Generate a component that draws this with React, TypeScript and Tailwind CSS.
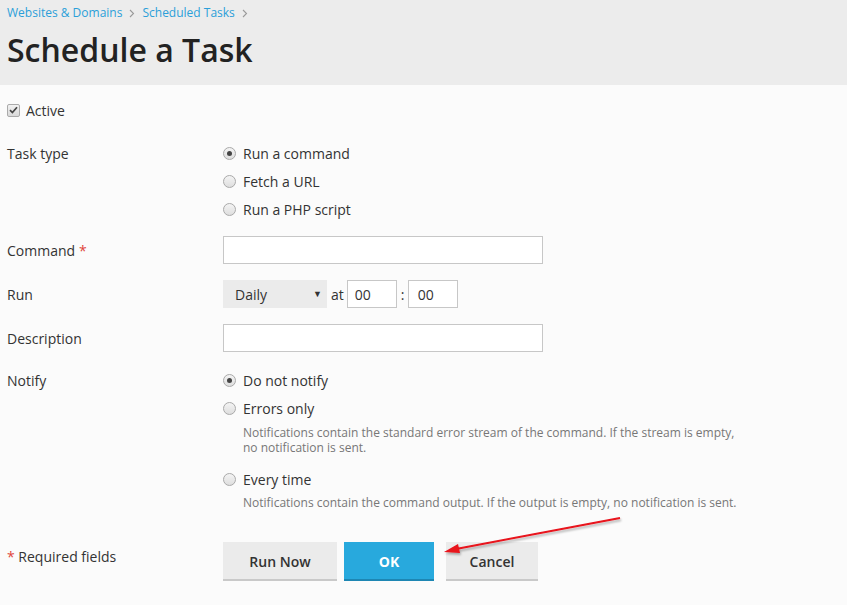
import React from "react";

const font = { fontFamily: '"Open Sans", "Noto Sans", sans-serif' };

function Radio({ checked }: { checked?: boolean }) {
  return (
    <span className="relative inline-flex h-[13px] w-[13px] shrink-0 items-center justify-center rounded-full border border-[#a9a9a9] bg-gradient-to-b from-[#f4f4f4] to-[#dedede]">
      {checked && <span className="h-[5px] w-[5px] rounded-full bg-[#444]" />}
    </span>
  );
}

function RadioRow({ label, checked }: { label: string; checked?: boolean }) {
  return (
    <div className="flex h-7 items-center gap-[7px]">
      <Radio checked={checked} />
      <span>{label}</span>
    </div>
  );
}

function Label({ children, h = "h-7" }: { children: React.ReactNode; h?: string }) {
  return <div className={`flex w-[216px] shrink-0 items-center ${h}`}>{children}</div>;
}

function Chevron() {
  return (
    <svg className="mx-[7px]" width="6" height="9" viewBox="0 0 6 9">
      <path d="M1 1 L4.5 4.5 L1 8" fill="none" stroke="#9a9a9a" strokeWidth="1.1" />
    </svg>
  );
}

export default function App() {
  return (
    <div className="relative min-h-[605px] w-full bg-[#fbfbfb] text-[14px] text-[#333]" style={font}>
      <div className="h-[85px] bg-[#ececec] px-[7px] pt-[4px]">
        <div className="flex items-center text-[12px] leading-[18px] text-[#2b9fd9]">
          <span>Websites &amp; Domains</span>
          <Chevron />
          <span>Scheduled Tasks</span>
          <Chevron />
        </div>
        <h1 className="mt-[7px] text-[32px] font-semibold leading-[42px] text-[#222]">Schedule a Task</h1>
      </div>

      <div className="px-[7px]">
        <div className="mt-[15px] flex h-5 items-center gap-[6px]">
          <span className="flex h-[13px] w-[13px] items-center justify-center rounded-[2px] border border-[#aaa] bg-gradient-to-b from-[#f2f2f2] to-[#d9d9d9]">
            <svg width="9" height="8" viewBox="0 0 9 8">
              <path d="M1 4.2 L3.4 6.5 L8 1.2" fill="none" stroke="#444" strokeWidth="1.7" />
            </svg>
          </span>
          <span>Active</span>
        </div>

        <div className="mt-[19px] flex">
          <Label>Task type</Label>
          <div className="flex flex-col">
            <RadioRow label="Run a command" checked />
            <RadioRow label="Fetch a URL" />
            <RadioRow label="Run a PHP script" />
          </div>
        </div>

        <div className="mt-[13px] flex">
          <Label>
            Command<span className="ml-[4px] text-[#e0443a]">*</span>
          </Label>
          <input className="h-7 w-[320px] border border-[#c7c7c7] bg-white outline-none" />
        </div>

        <div className="mt-[16px] flex">
          <Label>Run</Label>
          <div className="flex items-center">
            <div className="flex h-7 w-[104px] items-center justify-between bg-[#ebebeb] pl-[12px] pr-[5px]">
              <span>Daily</span>
              <span className="text-[9px] text-[#333]">▼</span>
            </div>
            <span className="ml-[4px] mr-[3px]">at</span>
            <div className="flex h-7 w-[50px] items-center border border-[#c7c7c7] bg-white pl-[7px]">00</div>
            <span className="mx-[4px] w-[3px]">:</span>
            <div className="flex h-7 w-[50px] items-center border border-[#c7c7c7] bg-white pl-[9px]">00</div>
          </div>
        </div>

        <div className="mt-[16px] flex">
          <Label>Description</Label>
          <input className="h-7 w-[320px] border border-[#c7c7c7] bg-white outline-none" />
        </div>

        <div className="mt-[14px] flex">
          <Label>Notify</Label>
          <div className="flex flex-col">
            <RadioRow label="Do not notify" checked />
            <RadioRow label="Errors only" />
            <p className="ml-[20px] mt-[3px] w-[505px] text-[12px] leading-[15px] text-[#777]">
              Notifications contain the standard error stream of the command. If the stream is empty, no notification is sent.
            </p>
            <div className="mt-[10px]">
              <RadioRow label="Every time" />
            </div>
            <p className="ml-[20px] mt-[2px] text-[12px] leading-[15px] text-[#777]">
              Notifications contain the command output. If the output is empty, no notification is sent.
            </p>
          </div>
        </div>

        <div className="mt-[32px] flex">
          <div className="w-[216px] shrink-0 pt-[4px]">
            <span className="text-[#e0443a]">*</span> Required fields
          </div>
          <div className="flex gap-[7px]">
            <button className="h-[39px] w-[114px] border-b-2 border-[#c9c9c9] bg-[#ebebeb] pt-[2px] font-semibold text-[#333]">Run Now</button>
            <button className="h-[39px] w-[90px] border-b-2 border-[#1d86b3] bg-[#28a9dd] pt-[2px] font-bold text-white">OK</button>
            <button className="ml-[5px] h-[39px] w-[92px] border-b-2 border-[#c9c9c9] bg-[#ebebeb] pt-[2px] font-semibold text-[#333]">Cancel</button>
          </div>
        </div>
      </div>

      <svg className="pointer-events-none absolute left-0 top-0" width="847" height="605">
        <defs>
          <filter id="sh" x="-10%" y="-50%" width="120%" height="200%">
            <feDropShadow dx="1" dy="2" stdDeviation="1.2" floodColor="#000" floodOpacity="0.3" />
          </filter>
        </defs>
        <g filter="url(#sh)">
          <line x1="620" y1="518" x2="456" y2="549" stroke="#e8121b" strokeWidth="2" />
          <polygon points="444,552 458,544 460,553" fill="#e8121b" />
        </g>
      </svg>
    </div>
  );
}
